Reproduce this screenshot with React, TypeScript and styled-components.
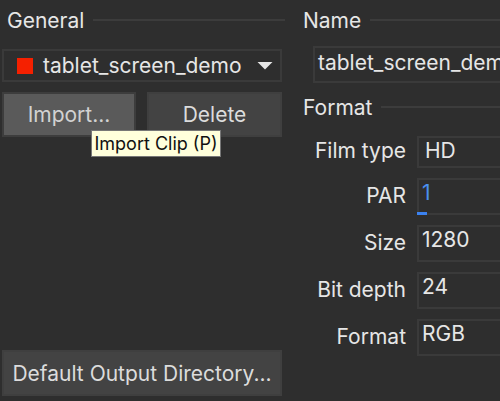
import React from "react";
import styled, { createGlobalStyle } from "styled-components";

const Global = createGlobalStyle`
  html, body { margin: 0; padding: 0; background: #2e2e2e; }
  #root { width: 500px; height: 401px; overflow: hidden; }
`;

const Page = styled.div`
  width: 500px;
  height: 401px;
  overflow: hidden;
  display: grid;
  grid-template-columns: 280px 197px;
  column-gap: 21px;
  padding-left: 2px;
  box-sizing: border-box;
  background: #2e2e2e;
  color: #e6e6e6;
  font-family: Inter, "Liberation Sans", sans-serif;
  font-size: 21px;
  -webkit-font-smoothing: antialiased;
`;

const LeftColumn = styled.div`
  display: flex;
  flex-direction: column;
  height: 396px;
  position: relative;
`;

const RightColumn = styled.div`
  display: flex;
  flex-direction: column;
  width: 197px;
`;

const SectionHead = styled.div<{ $inset?: number; $top: number; $bleed?: number }>`
  display: flex;
  align-items: center;
  gap: 9px;
  height: 24px;
  margin-top: ${(p) => p.$top}px;
  margin-right: ${(p) => -(p.$bleed ?? 0)}px;
  padding-left: ${(p) => p.$inset ?? 0}px;
  line-height: 24px;
`;

const HeadRule = styled.span`
  flex: 1;
  height: 2px;
  margin-top: -3px;
  background: #3c3c3c;
`;

const Select = styled.div`
  display: flex;
  align-items: center;
  box-sizing: border-box;
  height: 33px;
  margin-top: 16px;
  padding: 0 7px 0 13px;
  border: 2px solid #3a3a3a;
`;

const Swatch = styled.span`
  width: 16px;
  height: 16px;
  background: #f52000;
  margin-right: 10px;
`;

const SelectText = styled.span`
  flex: 1;
  font-size: 21px;
`;

const Buttons = styled.div`
  display: grid;
  grid-template-columns: 134px 135px;
  column-gap: 11px;
  margin-top: 10px;
`;

const Button = styled.div<{ $hover?: boolean }>`
  display: flex;
  align-items: center;
  justify-content: center;
  box-sizing: border-box;
  height: 45px;
  font-size: 21px;
  background: ${(p) => (p.$hover ? "#5a5a5a" : "#434343")};
  color: ${(p) => (p.$hover ? "#d2d2d2" : "#dcdcdc")};
  border: 2px solid ${(p) => (p.$hover ? "#3d3d3d" : "#3f3f3f")};
`;

const WideButton = styled(Button)`
  margin-top: auto;
  height: 46px;
  white-space: nowrap;
`;

const Tooltip = styled.div`
  position: absolute;
  left: 89px;
  top: 130px;
  box-sizing: border-box;
  width: 130px;
  height: 27px;
  display: flex;
  align-items: center;
  justify-content: center;
  background: #ffffdc;
  border: 1px solid #777;
  color: #111;
  font-size: 18px;
  white-space: nowrap;
`;

const NameField = styled.div`
  box-sizing: border-box;
  display: flex;
  align-items: center;
  height: 37px;
  margin: 13px 0 0 10px;
  padding: 0 0 4px 3px;
  border: 2px solid #3a3a3a;
  border-right: none;
  white-space: nowrap;
  overflow: hidden;
`;

const Rows = styled.div`
  display: flex;
  flex-direction: column;
  margin-top: 16px;
`;

const Row = styled.div<{ $h: number; $gap: number }>`
  display: grid;
  grid-template-columns: 103px 1fr;
  column-gap: 11px;
  align-items: center;
  height: ${(p) => p.$h}px;
  margin-bottom: ${(p) => p.$gap}px;
`;

const Label = styled.label`
  text-align: right;
  white-space: nowrap;
  margin-top: -3px;
`;

const Field = styled.div<{ $center?: boolean }>`
  position: relative;
  box-sizing: border-box;
  height: 100%;
  padding: ${(p) => (p.$center ? "0 0 2px 6px" : "0 0 0 3px")};
  display: flex;
  align-items: ${(p) => (p.$center ? "center" : "flex-start")};
  border: 2px solid #3a3a3a;
  border-right: none;
  line-height: 26px;
`;

const ActiveValue = styled.span`
  color: #4a90ee;
`;

const Caret = styled.span`
  position: absolute;
  left: -2px;
  bottom: -2px;
  width: 10px;
  height: 3px;
  background: #3b82f0;
`;

export default function App() {
  return (
    <Page>
      <Global />
      <LeftColumn>
        <SectionHead $inset={5} $top={9} $bleed={3}>
          General
          <HeadRule />
        </SectionHead>
        <Select>
          <Swatch />
          <SelectText>tablet_screen_demo</SelectText>
          <svg width="16" height="9" viewBox="0 0 16 9">
            <path d="M0.5 1h15L8 8.5z" fill="#e6e6e6" />
          </svg>
        </Select>
        <Buttons>
          <Button $hover>Import...</Button>
          <Button>Delete</Button>
        </Buttons>
        <WideButton>Default Output Directory...</WideButton>
        <Tooltip>Import Clip (P)</Tooltip>
      </LeftColumn>
      <RightColumn>
        <SectionHead $top={9}>
          Name
          <HeadRule />
        </SectionHead>
        <NameField>tablet_screen_demo</NameField>
        <SectionHead $top={13}>
          Format
          <HeadRule />
        </SectionHead>
        <Rows>
          <Row $h={32} $gap={10}>
            <Label>Film type</Label>
            <Field $center>HD</Field>
          </Row>
          <Row $h={37} $gap={10}>
            <Label>PAR</Label>
            <Field>
              <ActiveValue>1</ActiveValue>
              <Caret />
            </Field>
          </Row>
          <Row $h={37} $gap={10}>
            <Label>Size</Label>
            <Field>1280</Field>
          </Row>
          <Row $h={37} $gap={10}>
            <Label>Bit depth</Label>
            <Field>24</Field>
          </Row>
          <Row $h={37} $gap={0}>
            <Label>Format</Label>
            <Field>RGB</Field>
          </Row>
        </Rows>
      </RightColumn>
    </Page>
  );
}
